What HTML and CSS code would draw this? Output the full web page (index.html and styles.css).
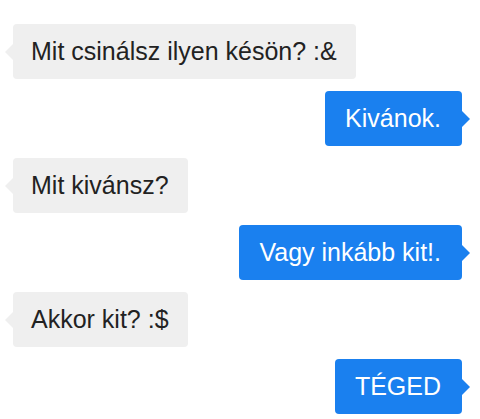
FILE: index.html
```html
<!DOCTYPE html>
<html lang="hu">
<head>
    <meta charset="UTF-8">
    <title>Chat</title>
    <link rel="stylesheet" href="styles.css">
</head>
<body>
    <div class="chat">
        <div class="msg received">Mit csinálsz ilyen késön? :&amp;</div>
        <div class="msg sent">Kivánok.</div>
        <div class="msg received">Mit kivánsz?</div>
        <div class="msg sent">Vagy inkább kit!.</div>
        <div class="msg received">Akkor kit? :$</div>
        <div class="msg sent">TÉGED</div>
    </div>
</body>
</html>
```

FILE: styles.css
```css
body {
    margin: 0;
    background: #ffffff;
    font-family: "Liberation Sans", Arial, sans-serif;
}

.chat {
    display: flex;
    flex-direction: column;
    gap: 12px;
    padding: 24px 18px 0 13px;
}

.msg {
    position: relative;
    height: 55px;
    line-height: 55px;
    padding: 0 19px 0 18px;
    font-size: 25px;
    border-radius: 4px;
    white-space: nowrap;
}

.msg::before {
    content: "";
    position: absolute;
    top: 50%;
    margin-top: -8px;
    border-top: 8px solid transparent;
    border-bottom: 8px solid transparent;
}

.received {
    align-self: flex-start;
    background-color: #efefef;
    color: #222222;
}

.received::before {
    left: -8px;
    border-right: 8px solid #efefef;
}

.sent {
    align-self: flex-end;
    background-color: #1a80ef;
    color: #ffffff;
    padding: 0 21px 0 20px;
}

.sent::before {
    right: -8px;
    border-left: 8px solid #1a80ef;
}
```
